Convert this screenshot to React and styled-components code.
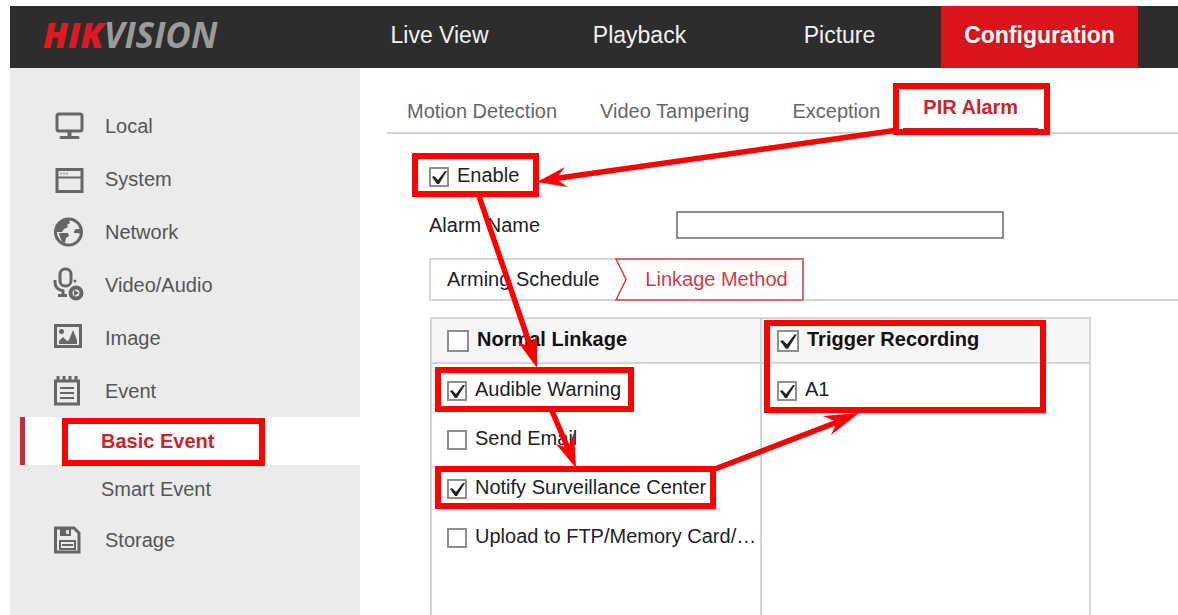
import React from "react";
import styled, { createGlobalStyle } from "styled-components";

const GlobalStyle = createGlobalStyle`
  *, *::before, *::after { box-sizing: border-box; }
  body {
    margin: 0;
    background: #fff;
    color: #222;
    font-family: "Liberation Sans", Arial, sans-serif;
    font-size: 20px;
    line-height: 24px;
  }
  button, input { font: inherit; color: inherit; }
  a { color: inherit; text-decoration: none; }
`;

const Page = styled.div`
  position: relative;
  display: flex;
  flex-direction: column;
  min-height: 100vh;
  padding: 6px 0 0 10px;
  overflow: hidden;
`;

const Header = styled.header`
  display: flex;
  height: 62px;
  background: #2d2d2d;
`;

const Brand = styled.a`
  flex: 0 0 331px;
  padding-left: 33px;
  line-height: 58px;
  font-family: "Open Sans", sans-serif;
  font-size: 35px;
  font-weight: 700;
  font-style: italic;
  color: #9b9b9b;
`;

const BrandAccent = styled.span`
  font-weight: 800;
  color: #dc1a21;
`;

const Nav = styled.nav`
  display: flex;
  gap: 3px;
`;

const NavLink = styled.a`
  display: flex;
  align-items: center;
  justify-content: center;
  width: 197px;
  padding-bottom: 4px;
  font-size: 23px;
  font-weight: ${(p) => (p.$active ? 700 : 400)};
  color: ${(p) => (p.$active ? "#fff" : "#f2f2f2")};
  background: ${(p) => (p.$active ? "#d8151d" : "transparent")};
`;

const Body = styled.div`
  display: flex;
  flex: 1;
`;

const Sidebar = styled.nav`
  flex: 0 0 350px;
  padding: 31px 0 0 10px;
  background: #ebebeb;
  color: #555;
`;

const MenuItem = styled.a`
  display: flex;
  align-items: center;
  gap: 21px;
  height: 53px;
  padding-left: 34px;
`;

const SubItem = styled.a`
  display: flex;
  align-items: center;
  height: 48px;
  padding-left: 76px;
  border-left: 5px solid ${(p) => (p.$active ? "#cc2a33" : "transparent")};
  background: ${(p) => (p.$active ? "#fff" : "transparent")};
  color: ${(p) => (p.$active ? "#c9252e" : "inherit")};
  font-weight: ${(p) => (p.$active ? 700 : 400)};
`;

const MenuIcon = styled.svg`
  width: 30px;
  height: 30px;
  overflow: visible;
  fill: none;
  stroke: #666;
  stroke-width: 3;
`;

const Main = styled.main`
  display: flex;
  flex: 1;
  flex-direction: column;
  min-width: 0;
  padding: 18px 0 0 27px;
`;

const Tabs = styled.div`
  display: flex;
  align-items: flex-end;
  gap: 3px;
  border-bottom: 2px solid #d2d2d2;
`;

const Tab = styled.button`
  height: ${(p) => (p.$active ? 43 : 42)}px;
  margin: 0 0 ${(p) => (p.$active ? 3 : 0)}px;
  padding: 0 20px;
  border: 0;
  border-bottom: ${(p) => (p.$active ? "1px solid #b8232b" : "0")};
  background: none;
  color: ${(p) => (p.$active ? "#c9252e" : "#666")};
  font-weight: ${(p) => (p.$active ? 700 : 400)};
  white-space: nowrap;
`;

const Form = styled.form`
  display: flex;
  flex: 1;
  flex-direction: column;
  padding: 18px 0 0 42px;
`;

const CheckLabel = styled.label`
  display: flex;
  align-items: center;
  gap: 8px;
  height: 49px;
  font-weight: ${(p) => (p.$heading ? 700 : 400)};
  color: ${(p) => (p.$heading ? "#111" : "#222")};
`;

const CheckText = styled.span`
  padding-bottom: 4px;
  white-space: nowrap;
`;

const CheckCell = styled.span`
  display: grid;
  width: ${(p) => (p.$large ? 22 : 20)}px;
  height: ${(p) => (p.$large ? 22 : 20)}px;
  > * { grid-area: 1 / 1; }
`;

const CheckInput = styled.input`
  appearance: none;
  width: 100%;
  height: 100%;
  margin: 0;
  border: 2px solid #8e8e8e;
  background: #fff;
  & + svg { visibility: hidden; }
  &:checked + svg { visibility: visible; }
`;

const CheckMark = styled.svg`
  width: 100%;
  height: 100%;
  pointer-events: none;
`;

const Field = styled.div`
  display: flex;
  align-items: center;
  height: 48px;
`;

const FieldLabel = styled.label`
  width: 247px;
`;

const TextInput = styled.input`
  width: 328px;
  height: 28px;
  border: 2px solid #8e8e8e;
  background: #fff;
`;

const Steps = styled.div`
  display: flex;
  height: 43px;
  margin: 9px 0 16px;
  box-shadow: inset 0 -2px #d6d6d6;
`;

const Step = styled.button`
  display: flex;
  align-items: center;
  padding: 0 16px 2px;
  border: 2px solid #d6d6d6;
  border-right: 0;
  background: #fff;
  color: #222;
`;

const ActiveStep = styled(Step)`
  padding: 0 14px 2px 0;
  border: 0;
  border-right: 2px solid #da6a70;
  box-shadow: inset 0 2px #da6a70, inset 0 -2px #da6a70;
  color: #cf3b43;
`;

const Chevron = styled.svg`
  width: 14px;
  height: 43px;
  margin: 0 16px -2px 0;
`;

const Linkage = styled.div`
  display: grid;
  flex: 1;
  grid-template-columns: 330px 331px;
  margin-left: 1px;
`;

const LinkageColumn = styled.section`
  border-top: 2px solid #d6d6d6;
  border-left: 2px solid #d6d6d6;
  &:last-child { border-right: 2px solid #d6d6d6; }
`;

const LinkageHead = styled.div`
  display: flex;
  align-items: center;
  height: 45px;
  padding-left: 15px;
  border-bottom: 2px solid #d6d6d6;
  background: #f6f6f6;
`;

const LinkageList = styled.div`
  padding: 2px 0 0 15px;
`;

const Annotations = styled.svg`
  position: absolute;
  top: 0;
  left: 0;
  width: 1178px;
  height: 615px;
  pointer-events: none;
  fill: none;
  stroke: #f00;
  stroke-width: 6;
  polygon { fill: #f00; stroke: none; }
`;

const icons = {
  Local: (
    <>
      <rect x="3" y="3" width="25" height="17" rx="2" />
      <path d="M15.5 20v6" strokeWidth="4" />
      <path d="M7 26.5h17" strokeLinecap="round" />
    </>
  ),
  System: (
    <>
      <rect x="3" y="5.5" width="25" height="22" />
      <path d="M3 13.5h25" strokeWidth="2" />
      <path d="M6 9.5h9" strokeWidth="2" strokeDasharray="2 1" stroke="#aaa" />
    </>
  ),
  Network: (
    <>
      <circle cx="14.5" cy="15" r="13" />
      <path
        d="M2 15 4 7l5-4 6 0 1 3-3 2 1 2-4 2-2 3zM5 16h9l1 3-3 2-1 5-3-1-2-5zM20 14l2-2h6v5l-5-1-3 0z"
        fill="#666"
        stroke="none"
      />
    </>
  ),
  "Video/Audio": (
    <>
      <rect x="6" y="-1" width="11" height="17" rx="5" />
      <path d="M1 10v2q0 8 9 9M4 25.5h9M9 20v5" />
      <circle cx="21" cy="11" r="1.5" fill="#666" stroke="none" />
      <circle cx="22" cy="23" r="5.5" strokeWidth="4" />
      <path d="M20 20l5 3-5 3z" fill="#666" stroke="none" />
    </>
  ),
  Image: (
    <>
      <rect x="1.5" y="2.5" width="25" height="21" />
      <circle cx="7.5" cy="8.5" r="2.5" fill="#666" stroke="none" />
      <path d="M5 21v-3l4-4 4 4 2-1 4-10 4 10v4z" fill="#666" stroke="none" />
    </>
  ),
  Event: (
    <>
      <path d="M1.5 5h23v23h-23z" />
      <path d="M4 0v5M10 0v5M16 0v5M22 0v5" />
      <path d="M6 12h14M6 17h14M6 22h14" strokeWidth="2" />
    </>
  ),
  Storage: (
    <>
      <path d="M1.5 3H20l5 5v19H1.5z" />
      <path d="M6 4h11v7H6z" fill="#666" stroke="none" />
      <path d="M12 5h3v4h-3z" fill="#ddd" stroke="none" />
      <path d="M6 16h15v8H6z" fill="none" strokeWidth="2" />
      <path d="M8 20h11" strokeWidth="2" />
    </>
  ),
};

function SideLink({ name }) {
  return (
    <MenuItem href="#">
      <MenuIcon viewBox="0 0 30 30" aria-hidden="true">{icons[name]}</MenuIcon>
      {name}
    </MenuItem>
  );
}

function Check({ label, checked, heading }) {
  return (
    <CheckLabel $heading={heading}>
      <CheckCell $large={heading}>
        <CheckInput type="checkbox" defaultChecked={checked} />
        <CheckMark viewBox="0 0 20 20" aria-hidden="true">
          <path d="M3 10l2-1 4 4 7-9 2 0-8 13h-2z" fill="#222" />
        </CheckMark>
      </CheckCell>
      <CheckText>{label}</CheckText>
    </CheckLabel>
  );
}

export default function App() {
  return (
    <Page>
      <GlobalStyle />
      <Header>
        <Brand href="#"><BrandAccent>HIK</BrandAccent>VISION</Brand>
        <Nav>
          <NavLink href="#">Live View</NavLink>
          <NavLink href="#">Playback</NavLink>
          <NavLink href="#">Picture</NavLink>
          <NavLink href="#" $active>Configuration</NavLink>
        </Nav>
      </Header>
      <Body>
        <Sidebar>
          {["Local", "System", "Network", "Video/Audio", "Image", "Event"].map((n) => (
            <SideLink key={n} name={n} />
          ))}
          <SubItem href="#" $active>Basic Event</SubItem>
          <SubItem href="#">Smart Event</SubItem>
          <SideLink name="Storage" />
        </Sidebar>
        <Main>
          <Tabs>
            <Tab type="button">Motion Detection</Tab>
            <Tab type="button">Video Tampering</Tab>
            <Tab type="button">Exception</Tab>
            <Tab type="button" $active>PIR Alarm</Tab>
          </Tabs>
          <Form>
            <Check label="Enable" checked />
            <Field>
              <FieldLabel htmlFor="alarm-name">Alarm Name</FieldLabel>
              <TextInput id="alarm-name" type="text" />
            </Field>
            <Steps>
              <Step type="button">Arming Schedule</Step>
              <ActiveStep type="button">
                <Chevron viewBox="0 0 14 43" aria-hidden="true">
                  <path d="M1 1l10 20.5L1 42" fill="none" stroke="#cf3b43" strokeWidth="1.5" />
                </Chevron>
                Linkage Method
              </ActiveStep>
            </Steps>
            <Linkage>
              <LinkageColumn>
                <LinkageHead><Check heading label="Normal Linkage" /></LinkageHead>
                <LinkageList>
                  <Check label="Audible Warning" checked />
                  <Check label="Send Email" />
                  <Check label="Notify Surveillance Center" checked />
                  <Check label="Upload to FTP/Memory Card/…" />
                </LinkageList>
              </LinkageColumn>
              <LinkageColumn>
                <LinkageHead><Check heading label="Trigger Recording" checked /></LinkageHead>
                <LinkageList>
                  <Check label="A1" checked />
                </LinkageList>
              </LinkageColumn>
            </Linkage>
          </Form>
        </Main>
      </Body>
      <Annotations viewBox="0 0 1178 615" aria-hidden="true">
        <rect x="896" y="86" width="151" height="46" />
        <rect x="415" y="156" width="121" height="38" />
        <rect x="65" y="421" width="197" height="42" />
        <rect x="438" y="370" width="193" height="39" />
        <rect x="438" y="469" width="275" height="37" />
        <rect x="767" y="323" width="276" height="87" />
        <path d="M898 130L552 179M479 196L532 351M552 411L570 453M715 469L840 421" strokeWidth="5.5" />
        <polygon points="537,182 565,167 556,179 568,187" />
        <polygon points="537,368 518,342 530,347 537,335" />
        <polygon points="576,468 556,444 568,448 574,433" />
        <polygon points="859,413 823,416 837,422 831,435" />
      </Annotations>
    </Page>
  );
}
